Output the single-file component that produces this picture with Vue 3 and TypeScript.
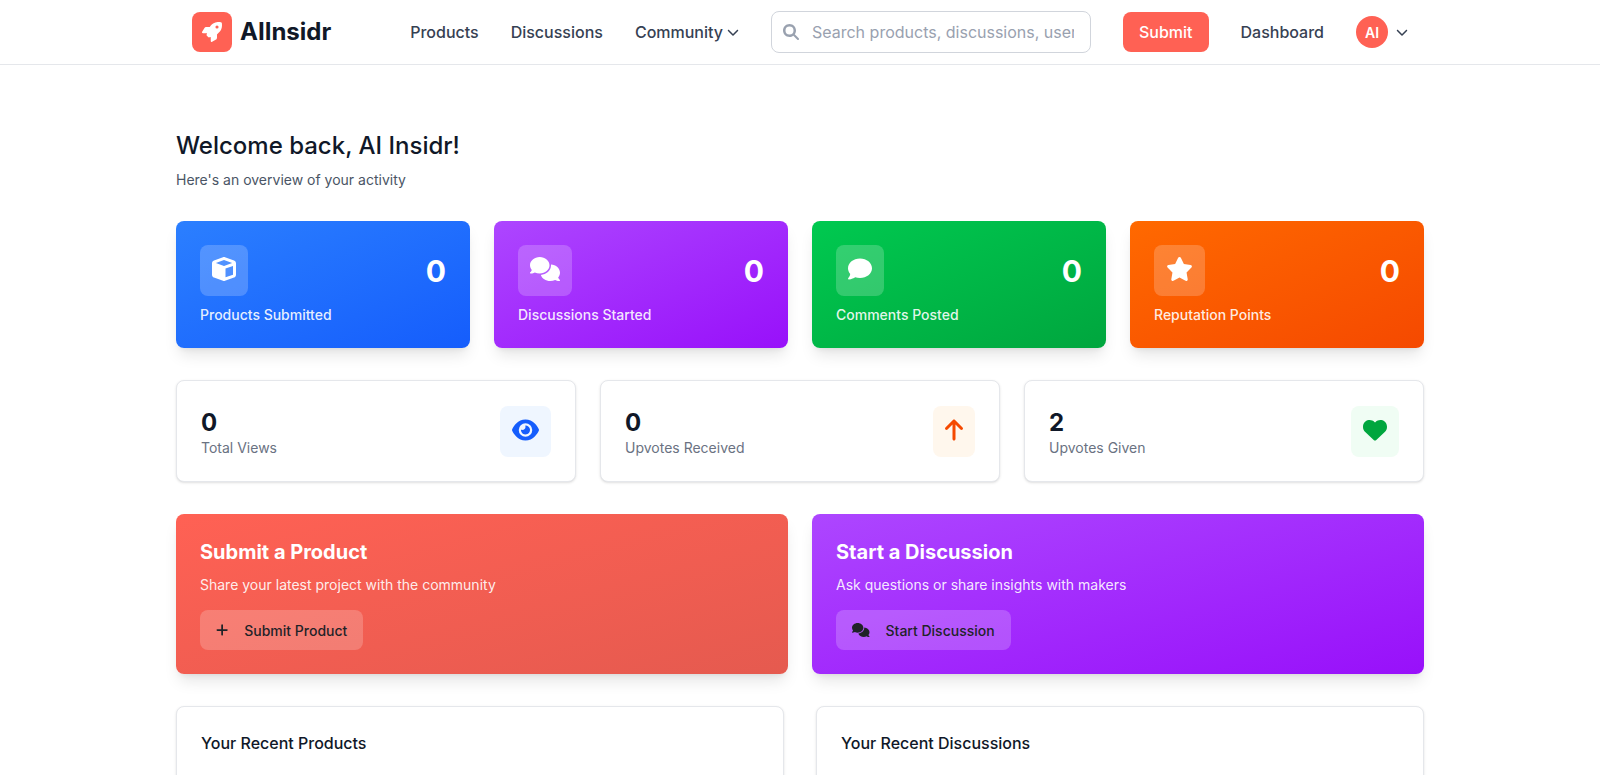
<script setup lang="ts">
interface Icon {
  w: number;
  d: string;
}

const icons: Record<string, Icon> = {
  rocket: { w: 512, d: 'M156.6 384.9L125.7 354c-8.5-8.5-11.5-20.8-7.7-32.2c3-8.9 7-20.5 11.8-33.8L24 288c-8.6 0-16.6-4.6-20.9-12.1s-4.2-16.7 .2-24.1l52.5-88.5c13-21.9 36.5-35.3 61.9-35.3l82.3 0c2.4-4 4.8-7.7 7.2-11.3C289.1-4.1 411.1-8.1 483.9 5.3c11.6 2.1 20.6 11.2 22.8 22.8c13.4 72.9 9.3 194.8-111.4 276.7c-3.5 2.4-7.3 4.8-11.3 7.2v82.3c0 25.4-13.4 49-35.3 61.9l-88.5 52.5c-7.4 4.4-16.6 4.5-24.1 .2s-12.1-12.2-12.1-20.9V380.8c-14.1 4.9-26.4 8.9-35.7 11.9c-11.2 3.6-23.4 .5-31.8-7.8zM384 168a40 40 0 1 0 0-80 40 40 0 1 0 0 80z' },
  search: { w: 512, d: 'M416 208c0 45.9-14.9 88.3-40 122.7L502.6 457.4c12.5 12.5 12.5 32.8 0 45.3s-32.8 12.5-45.3 0L330.7 376c-34.4 25.2-76.8 40-122.7 40C93.1 416 0 322.9 0 208S93.1 0 208 0S416 93.1 416 208zM208 336a128 128 0 1 0 0-256 128 128 0 1 0 0 256z' },
  cube: { w: 512, d: 'M234.5 5.7c13.9-5 29.1-5 43.1 0l192 68.6C495 83.4 512 107.5 512 134.6V377.4c0 27-17 51.2-42.5 60.3l-192 68.6c-13.9 5-29.1 5-43.1 0l-192-68.6C17 428.6 0 404.5 0 377.4V134.6c0-27 17-51.2 42.5-60.3l192-68.6zM256 66L82.3 128 256 190l173.7-62L256 66zm32 368.6l160-57.1v-188L288 246.6v188z' },
  comments: { w: 640, d: 'M208 352c114.9 0 208-78.8 208-176S322.9 0 208 0S0 78.8 0 176c0 38.6 14.7 74.3 39.6 103.4c-3.5 9.4-8.7 17.7-14.2 24.7c-4.8 6.2-9.7 11-13.3 14.3c-1.8 1.6-3.3 2.9-4.3 3.7c-.5 .4-.9 .7-1.1 .8l-.2 .2 0 0 0 0C1 327.2-1.4 334.4 .8 340.9S9.1 352 16 352c21.8 0 43.8-5.6 62.1-12.5c9.2-3.5 17.8-7.4 25.3-11.4C134.1 343.3 169.8 352 208 352zM448 176c0 112.3-99.1 196.9-216.5 207C255.8 457.4 336.4 512 432 512c38.2 0 73.9-8.7 104.7-23.9c7.5 4 16 7.9 25.2 11.4c18.3 6.9 40.3 12.5 62.1 12.5c6.9 0 13.1-4.5 15.2-11.1c2.1-6.6-.2-13.8-5.8-17.9l0 0 0 0-.2-.2c-.2-.2-.6-.4-1.1-.8c-1-.8-2.5-2-4.3-3.7c-3.6-3.3-8.5-8.1-13.3-14.3c-5.5-7-10.7-15.4-14.2-24.7c24.9-29 39.6-64.7 39.6-103.4c0-92.8-84.9-168.9-192.6-175.5c.4 5.1 .6 10.3 .6 15.5z' },
  comment: { w: 512, d: 'M512 240c0 114.9-114.6 208-256 208c-37.1 0-72.3-6.4-104.1-17.9c-11.9 8.7-31.3 20.6-54.3 30.6C73.6 471.1 44.7 480 16 480c-6.5 0-12.3-3.9-14.8-9.9c-2.5-6-1.1-12.8 3.4-17.4l0 0 0 0 0 0 0 0 .3-.3c.3-.3 .7-.7 1.3-1.4c1.1-1.2 2.8-3.1 4.9-5.7c4.1-5 9.6-12.4 15.2-21.6c10-16.6 19.5-38.4 21.4-62.9C17.7 326.8 0 285.1 0 240C0 125.1 114.6 32 256 32s256 93.1 256 208z' },
  star: { w: 576, d: 'M316.9 18C311.6 7 300.4 0 288.1 0s-23.4 7-28.8 18L195 150.3 51.4 171.5c-12 1.8-22 10.2-25.7 21.7s-.7 24.2 7.9 32.7L137.8 329 113.2 474.7c-2 12 3 24.2 12.9 31.3s23 8 33.8 2.3l128.3-68.5 128.3 68.5c10.8 5.7 23.9 4.9 33.8-2.3s14.9-19.3 12.9-31.3L438.5 329 542.7 225.9c8.6-8.5 11.7-21.2 7.9-32.7s-13.7-19.9-25.7-21.7L381.2 150.3 316.9 18z' },
  eye: { w: 576, d: 'M288 32c-80.8 0-145.5 36.8-192.6 80.6C48.6 156 17.3 208 2.5 243.7c-3.3 7.9-3.3 16.7 0 24.6C17.3 304 48.6 356 95.4 399.4C142.5 443.2 207.2 480 288 480s145.5-36.8 192.6-80.6c46.8-43.5 78.1-95.4 93-131.1c3.3-7.9 3.3-16.7 0-24.6c-14.9-35.7-46.2-87.7-93-131.1C433.5 68.8 368.8 32 288 32zM144 256a144 144 0 1 1 288 0 144 144 0 1 1 -288 0zm144-64c0 35.3-28.7 64-64 64c-7.1 0-13.9-1.2-20.3-3.3c-5.5-1.8-11.9 1.6-11.7 7.4c.3 6.9 1.3 13.8 3.2 20.7c13.7 51.2 66.4 81.6 117.6 67.9s81.6-66.4 67.9-117.6c-11.1-41.5-47.8-69.4-88.6-71.1c-5.8-.2-9.2 6.1-7.4 11.7c2.1 6.4 3.3 13.2 3.3 20.3z' },
  arrowUp: { w: 384, d: 'M214.6 41.4c-12.5-12.5-32.8-12.5-45.3 0l-160 160c-12.5 12.5-12.5 32.8 0 45.3s32.8 12.5 45.3 0L160 141.2V448c0 17.7 14.3 32 32 32s32-14.3 32-32V141.2L329.4 246.6c12.5 12.5 32.8 12.5 45.3 0s12.5-32.8 0-45.3l-160-160z' },
  heart: { w: 512, d: 'M47.6 300.4L228.3 469.1c7.5 7 17.4 10.9 27.7 10.9s20.2-3.9 27.7-10.9L464.4 300.4c30.4-28.3 47.6-68 47.6-109.5v-5.8c0-69.9-50.5-129.5-119.4-141C347 36.5 300.6 51.4 268 84L256 96 244 84c-32.6-32.6-79-47.5-124.6-39.9C50.5 55.6 0 115.2 0 185.1v5.8c0 41.5 17.2 81.2 47.6 109.5z' },
  plus: { w: 448, d: 'M256 80c0-17.7-14.3-32-32-32s-32 14.3-32 32V224H48c-17.7 0-32 14.3-32 32s14.3 32 32 32H192V432c0 17.7 14.3 32 32 32s32-14.3 32-32V288H400c17.7 0 32-14.3 32-32s-14.3-32-32-32H256V80z' },
};

const chevronPath = 'M233.4 406.6c12.5 12.5 32.8 12.5 45.3 0l192-192c12.5-12.5 12.5-32.8 0-45.3s-32.8-12.5-45.3 0L256 338.7 86.6 169.4c-12.5-12.5-32.8-12.5-45.3 0s-12.5 32.8 0 45.3l192 192z';

const iconWidth = (name: string, size: number) => (icons[name].w / 512) * size;

const navLinks = ['Products', 'Discussions'];

const summaryCards = [
  { label: 'Products Submitted', icon: 'cube', tone: 'blue' },
  { label: 'Discussions Started', icon: 'comments', tone: 'purple' },
  { label: 'Comments Posted', icon: 'comment', tone: 'green' },
  { label: 'Reputation Points', icon: 'star', tone: 'orange' },
];

const statCards = [
  { value: 0, label: 'Total Views', icon: 'eye', tone: 'blue' },
  { value: 0, label: 'Upvotes Received', icon: 'arrowUp', tone: 'orange' },
  { value: 2, label: 'Upvotes Given', icon: 'heart', tone: 'green' },
];

const actionCards = [
  { title: 'Submit a Product', text: 'Share your latest project with the community', button: 'Submit Product', icon: 'plus', tone: 'coral' },
  { title: 'Start a Discussion', text: 'Ask questions or share insights with makers', button: 'Start Discussion', icon: 'comments', tone: 'purple' },
];

const recentPanels = ['Your Recent Products', 'Your Recent Discussions'];
</script>

<template>
  <div class="page">
    <header class="topbar">
      <div class="topbar-inner">
        <a class="brand">
          <span class="brand-mark">
            <svg :viewBox="`0 0 ${icons.rocket.w} 512`" width="20" height="20" fill="currentColor"><path :d="icons.rocket.d" /></svg>
          </span>
          <span class="brand-name">AIInsidr</span>
        </a>

        <nav class="nav">
          <a v-for="link in navLinks" :key="link" class="nav-link">{{ link }}</a>
          <a class="nav-link nav-link--menu">
            Community
            <svg viewBox="0 0 512 512" width="12" height="12" fill="currentColor"><path :d="chevronPath" /></svg>
          </a>
        </nav>

        <label class="search">
          <svg class="search-icon" viewBox="0 0 512 512" width="16" height="16" fill="currentColor"><path :d="icons.search.d" /></svg>
          <input class="search-input" type="text" placeholder="Search products, discussions, users..." />
        </label>

        <div class="topbar-actions">
          <a class="submit-btn">Submit</a>
          <a class="nav-link">Dashboard</a>
          <div class="user">
            <span class="avatar">AI</span>
            <svg viewBox="0 0 512 512" width="12" height="12" fill="currentColor"><path :d="chevronPath" /></svg>
          </div>
        </div>
      </div>
    </header>

    <main class="content">
      <h1 class="welcome">Welcome back, AI Insidr!</h1>
      <p class="welcome-sub">Here's an overview of your activity</p>

      <section class="summary-grid">
        <div v-for="card in summaryCards" :key="card.label" class="summary-card" :class="`tone-${card.tone}`">
          <div class="summary-top">
            <span class="summary-icon">
              <svg :viewBox="`0 0 ${icons[card.icon].w} 512`" :width="iconWidth(card.icon, 24)" height="24" fill="currentColor"><path :d="icons[card.icon].d" /></svg>
            </span>
            <span class="summary-value">0</span>
          </div>
          <div class="summary-label">{{ card.label }}</div>
        </div>
      </section>

      <section class="stat-grid">
        <div v-for="stat in statCards" :key="stat.label" class="stat-card">
          <div class="stat-text">
            <div class="stat-value">{{ stat.value }}</div>
            <div class="stat-label">{{ stat.label }}</div>
          </div>
          <span class="stat-icon" :class="`stat-icon--${stat.tone}`">
            <svg :viewBox="`0 0 ${icons[stat.icon].w} 512`" :width="iconWidth(stat.icon, 24)" height="24" fill="currentColor"><path :d="icons[stat.icon].d" /></svg>
          </span>
        </div>
      </section>

      <section class="action-grid">
        <div v-for="action in actionCards" :key="action.title" class="action-card" :class="`tone-${action.tone}`">
          <h2 class="action-title">{{ action.title }}</h2>
          <p class="action-text">{{ action.text }}</p>
          <a class="action-btn">
            <svg :viewBox="`0 0 ${icons[action.icon].w} 512`" :width="iconWidth(action.icon, 14)" height="14" fill="currentColor"><path :d="icons[action.icon].d" /></svg>
            {{ action.button }}
          </a>
        </div>
      </section>

      <section class="recent-grid">
        <div v-for="panel in recentPanels" :key="panel" class="recent-panel">
          <h3 class="recent-title">{{ panel }}</h3>
        </div>
      </section>
    </main>
  </div>
</template>

<style>
html,
body {
  background: #fff;
  overflow: hidden;
}
</style>

<style scoped>
.page {
  font-family: Inter, "Liberation Sans", sans-serif;
  color: #101828;
  background: #fff;
}

.topbar {
  height: 65px;
  box-sizing: border-box;
  border-bottom: 1px solid #e5e7eb;
  background: #fff;
}

.topbar-inner {
  display: flex;
  align-items: center;
  height: 64px;
  max-width: 1216px;
  margin: 0 auto;
}

.brand {
  display: flex;
  align-items: center;
  gap: 8px;
}

.brand-mark {
  display: flex;
  align-items: center;
  justify-content: center;
  width: 40px;
  height: 40px;
  border-radius: 8px;
  background: #ff6154;
  color: #fff;
}

.brand-name {
  font-size: 24px;
  font-weight: 700;
  line-height: 32px;
  color: #101828;
}

.nav {
  display: flex;
  align-items: center;
  gap: 32px;
  margin-left: 79px;
}

.nav-link {
  font-size: 16px;
  font-weight: 500;
  line-height: 24px;
  color: #364153;
}

.nav-link--menu {
  display: flex;
  align-items: center;
  gap: 4px;
}

.search {
  position: relative;
  display: block;
  width: 320px;
  margin-left: 32px;
}

.search-icon {
  position: absolute;
  top: 13px;
  left: 12px;
  color: #99a1af;
}

.search-input {
  display: block;
  width: 100%;
  height: 42px;
  box-sizing: border-box;
  padding: 8px 16px 8px 40px;
  border: 1px solid #d1d5dc;
  border-radius: 8px;
  outline: none;
  font-family: inherit;
  font-size: 16px;
  color: #101828;
}

.search-input::placeholder {
  color: #99a1af;
  opacity: 1;
}

.topbar-actions {
  display: flex;
  align-items: center;
  gap: 32px;
  margin-left: 32px;
}

.submit-btn {
  padding: 8px 16px;
  border-radius: 8px;
  background: #ff6154;
  color: #fff;
  font-size: 16px;
  font-weight: 500;
  line-height: 24px;
}

.user {
  display: flex;
  align-items: center;
  gap: 8px;
  color: #364153;
}

.avatar {
  display: flex;
  align-items: center;
  justify-content: center;
  width: 32px;
  height: 32px;
  border-radius: 50%;
  background: #ff6154;
  color: #fff;
  font-size: 14px;
  font-weight: 600;
}

.content {
  max-width: 1248px;
  margin: 0 auto;
  padding-top: 65px;
}

.welcome {
  margin: 0;
  font-size: 24px;
  font-weight: 500;
  line-height: 32px;
  color: #101828;
}

.welcome-sub {
  margin: 8px 0 0;
  font-size: 14px;
  line-height: 20px;
  color: #4a5565;
}

.summary-grid {
  display: grid;
  grid-template-columns: repeat(4, 1fr);
  gap: 24px;
  margin-top: 31px;
}

.summary-card {
  padding: 24px 24px 23px;
  border-radius: 8px;
  color: #fff;
  box-shadow: 0 10px 15px -3px rgba(0, 0, 0, 0.1), 0 4px 6px -4px rgba(0, 0, 0, 0.1);
}

.tone-blue {
  background: linear-gradient(to bottom right, #2b7fff, #155dfc);
}

.tone-purple {
  background: linear-gradient(to bottom right, #ad46ff, #9810fa);
}

.tone-green {
  background: linear-gradient(to bottom right, #00c950, #00a63e);
}

.tone-orange {
  background: linear-gradient(to bottom right, #ff6900, #f54900);
}

.tone-coral {
  background: linear-gradient(to bottom right, #ff6154, #e55a4f);
}

.summary-top {
  display: flex;
  align-items: center;
  justify-content: space-between;
  margin-bottom: 9px;
}

.summary-icon {
  display: flex;
  align-items: center;
  justify-content: center;
  height: 48px;
  padding: 0 12px 3px;
  border-radius: 8px;
  background: rgba(255, 255, 255, 0.2);
}

.summary-value {
  font-size: 30px;
  font-weight: 700;
  line-height: 36px;
}

.summary-label {
  font-size: 14px;
  font-weight: 500;
  line-height: 20px;
  color: rgba(255, 255, 255, 0.9);
}

.stat-grid {
  display: grid;
  grid-template-columns: repeat(3, 1fr);
  gap: 24px;
  margin-top: 32px;
}

.stat-card {
  display: flex;
  align-items: center;
  justify-content: space-between;
  padding: 24px;
  border: 1px solid #e5e7eb;
  border-radius: 8px;
  background: #fff;
  box-shadow: 0 1px 3px 0 rgba(0, 0, 0, 0.1), 0 1px 2px -1px rgba(0, 0, 0, 0.1);
}

.stat-value {
  margin-top: 2px;
  margin-bottom: -1px;
  font-size: 24px;
  font-weight: 700;
  line-height: 32px;
  color: #101828;
}

.stat-label {
  margin-bottom: -1px;
  font-size: 14px;
  line-height: 20px;
  color: #6a7282;
}

.stat-icon {
  display: flex;
  align-items: center;
  justify-content: center;
  height: 48px;
  padding: 0 12px 3px;
  border-radius: 8px;
}

.stat-icon--blue {
  background: #eff6ff;
  color: #155dfc;
}

.stat-icon--orange {
  background: #fff7ed;
  color: #f54900;
}

.stat-icon--green {
  background: #f0fdf4;
  color: #00a63e;
}

.action-grid {
  display: grid;
  grid-template-columns: repeat(2, 1fr);
  gap: 24px;
  margin-top: 32px;
}

.action-card {
  padding: 24px;
  border-radius: 8px;
  color: #fff;
  box-shadow: 0 10px 15px -3px rgba(0, 0, 0, 0.1), 0 4px 6px -4px rgba(0, 0, 0, 0.1);
}

.action-title {
  margin: 0 0 9px;
  font-size: 20px;
  font-weight: 700;
  line-height: 28px;
}

.action-text {
  margin: 0 0 15px;
  font-size: 14px;
  line-height: 20px;
  color: rgba(255, 255, 255, 0.9);
}

.action-btn {
  display: inline-flex;
  align-items: center;
  gap: 16px;
  height: 40px;
  padding: 0 16px;
  border-radius: 8px;
  background: rgba(255, 255, 255, 0.2);
  color: #1f2328;
  font-size: 14px;
  font-weight: 500;
}

.recent-grid {
  display: grid;
  grid-template-columns: repeat(2, 1fr);
  gap: 32px;
  margin-top: 32px;
}

.recent-panel {
  min-height: 160px;
  padding: 24px;
  border: 1px solid #e5e7eb;
  border-radius: 8px;
  background: #fff;
  box-shadow: 0 1px 3px 0 rgba(0, 0, 0, 0.1), 0 1px 2px -1px rgba(0, 0, 0, 0.1);
}

.recent-title {
  margin: 0;
  font-size: 16px;
  font-weight: 500;
  line-height: 24px;
  color: #101828;
}
</style>
